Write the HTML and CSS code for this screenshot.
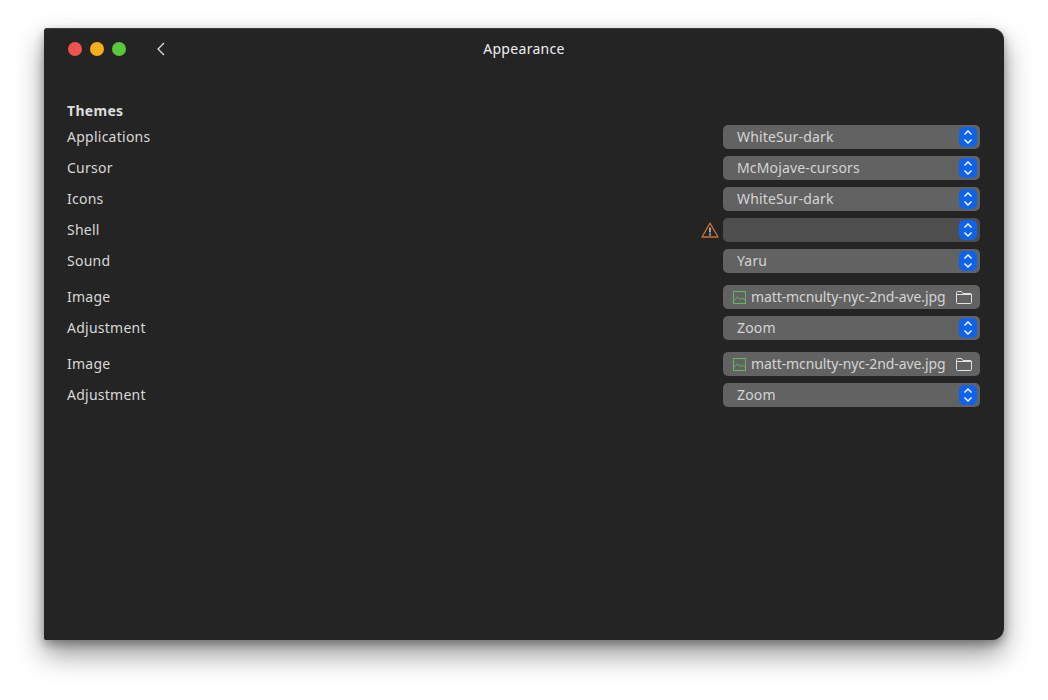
FILE: index.html
```html
<!DOCTYPE html>
<html lang="en">
<head>
<meta charset="utf-8">
<title>Appearance</title>
<link rel="stylesheet" href="styles.css">
</head>
<body>
<main class="window">
  <header class="titlebar">
    <div class="lights">
      <span class="light red"></span>
      <span class="light yellow"></span>
      <span class="light green"></span>
    </div>
    <svg class="back" width="10" height="14" viewBox="0 0 10 14"><path d="M8 1L2 7l6 6" fill="none" stroke="#e6e6e6" stroke-width="1.2"/></svg>
    <h1 class="title">Appearance</h1>
  </header>
  <section class="content">
    <h2 class="heading">Themes</h2>
    <div class="group">
      <div class="row"><span class="label">Applications</span><div class="select"><span class="value">WhiteSur-dark</span><span class="spin"><svg width="10" height="16" viewBox="0 0 10 16"><path d="M1.500 5.500L5 2l3.500 3.500M1.500 10.500L5 14l3.500-3.500" fill="none" stroke="#fff" stroke-width="1.400"/></svg></span></div></div>
      <div class="row"><span class="label">Cursor</span><div class="select"><span class="value">McMojave-cursors</span><span class="spin"><svg width="10" height="16" viewBox="0 0 10 16"><path d="M1.500 5.500L5 2l3.500 3.500M1.500 10.500L5 14l3.500-3.500" fill="none" stroke="#fff" stroke-width="1.400"/></svg></span></div></div>
      <div class="row"><span class="label">Icons</span><div class="select"><span class="value">WhiteSur-dark</span><span class="spin"><svg width="10" height="16" viewBox="0 0 10 16"><path d="M1.500 5.500L5 2l3.500 3.500M1.500 10.500L5 14l3.500-3.500" fill="none" stroke="#fff" stroke-width="1.400"/></svg></span></div></div>
      <div class="row"><span class="label">Shell</span>
        <svg class="warn" width="18" height="16" viewBox="0 0 18 16"><path d="M9 1.200L1 15h16z" fill="none" stroke="#c8703c" stroke-width="1.300" stroke-linejoin="round"/><path d="M9 5.500v5" stroke="#d8d0c8" stroke-width="1.500"/><path d="M9 11.500v2" stroke="#d8d0c8" stroke-width="1.500"/></svg>
        <div class="select dim"><span class="value"></span><span class="spin"><svg width="10" height="16" viewBox="0 0 10 16"><path d="M1.500 5.500L5 2l3.500 3.500M1.500 10.500L5 14l3.500-3.500" fill="none" stroke="#fff" stroke-width="1.400"/></svg></span></div></div>
      <div class="row"><span class="label">Sound</span><div class="select"><span class="value">Yaru</span><span class="spin"><svg width="10" height="16" viewBox="0 0 10 16"><path d="M1.500 5.500L5 2l3.500 3.500M1.500 10.500L5 14l3.500-3.500" fill="none" stroke="#fff" stroke-width="1.400"/></svg></span></div></div>
    </div>
    <div class="group">
      <div class="row"><span class="label">Image</span><div class="select file">
        <svg class="img-icon" width="14" height="14" viewBox="0 0 14 14"><rect x=".5" y="1.500" width="12" height="12" fill="none" stroke="#62b862"/><path d="M1 10.500L4.500 7l3 2.500 2-1.500 3 2.500" fill="none" stroke="#62b862"/></svg>
        <span class="filename">matt-mcnulty-nyc-2nd-ave.jpg</span>
        <svg class="folder" width="16" height="14" viewBox="0 0 16 14"><path d="M1.500 1.500h4l1.500 2h7.500a1 1 0 0 1 1 1v8a1 1 0 0 1-1 1h-13a1 1 0 0 1-1-1v-10a1 1 0 0 1 1-1zM.5 4.500h15" fill="none" stroke="#e2e2e2"/></svg>
      </div></div>
      <div class="row"><span class="label">Adjustment</span><div class="select"><span class="value">Zoom</span><span class="spin"><svg width="10" height="16" viewBox="0 0 10 16"><path d="M1.500 5.500L5 2l3.500 3.500M1.500 10.500L5 14l3.500-3.500" fill="none" stroke="#fff" stroke-width="1.400"/></svg></span></div></div>
    </div>
    <div class="group">
      <div class="row"><span class="label">Image</span><div class="select file">
        <svg class="img-icon" width="14" height="14" viewBox="0 0 14 14"><rect x=".5" y="1.500" width="12" height="12" fill="none" stroke="#62b862"/><path d="M1 10.500L4.500 7l3 2.500 2-1.500 3 2.500" fill="none" stroke="#62b862"/></svg>
        <span class="filename">matt-mcnulty-nyc-2nd-ave.jpg</span>
        <svg class="folder" width="16" height="14" viewBox="0 0 16 14"><path d="M1.500 1.500h4l1.500 2h7.500a1 1 0 0 1 1 1v8a1 1 0 0 1-1 1h-13a1 1 0 0 1-1-1v-10a1 1 0 0 1 1-1zM.5 4.500h15" fill="none" stroke="#e2e2e2"/></svg>
      </div></div>
      <div class="row"><span class="label">Adjustment</span><div class="select"><span class="value">Zoom</span><span class="spin"><svg width="10" height="16" viewBox="0 0 10 16"><path d="M1.500 5.500L5 2l3.500 3.500M1.500 10.500L5 14l3.500-3.500" fill="none" stroke="#fff" stroke-width="1.400"/></svg></span></div></div>
    </div>
  </section>
</main>
</body>
</html>
```

FILE: styles.css
```css
* { box-sizing: border-box; }
html, body { margin: 0; height: 100%; background: #fff; overflow: hidden; }
body {
  padding: 28px 44px 60px;
  font-family: "Noto Sans", "Open Sans", sans-serif;
  font-size: 14px;
  color: #d8d8d8;
}
.window {
  width: 960px;
  height: 612px;
  background: #242424;
  border-radius: 3px 12px 12px 2px;
  border-top: 1px solid #3c3c3c;
  box-shadow: 0 14px 28px rgba(0,0,0,.42), 0 4px 10px rgba(0,0,0,.3);
  display: flex;
  flex-direction: column;
}
.titlebar {
  height: 40px;
  display: flex;
  align-items: center;
  padding: 0 0 0 24px;
  position: relative;
}
.lights { display: flex; gap: 8px; }
.light { width: 14px; height: 14px; border-radius: 50%; }
.red { background: #ed5450; }
.yellow { background: #f6ae1c; }
.green { background: #5ac83c; }
.back { margin-left: 30px; }
.title {
  position: absolute;
  left: 0;
  right: 0;
  text-align: center;
  margin: 0;
  padding-bottom: 2px;
  font-size: 14px;
  font-weight: 400;
  letter-spacing: .3px;
  color: #f0f0f0;
}
.content { padding: 32px 24px 0 23px; }
.heading {
  margin: 0;
  height: 24px;
  line-height: 20px;
  font-size: 14px;
  font-weight: 700;
  letter-spacing: .3px;
  color: #dcdcdc;
}
.group { display: flex; flex-direction: column; gap: 7px; margin-bottom: 12px; }
.row { display: flex; align-items: center; height: 24px; }
.label { flex: 1; padding-bottom: 2px; letter-spacing: .25px; }
.warn { margin-right: 4px; }
.select {
  width: 257px;
  height: 24px;
  background: #626262;
  border-radius: 5px;
  display: flex;
  align-items: center;
  padding: 0 3px 0 14px;
  color: #d4d4d4;
}
.select.dim { background: #4e4e4e; }
.value { flex: 1; padding-bottom: 2px; letter-spacing: .15px; }
.spin {
  width: 18px;
  height: 20px;
  background: #0f62ea;
  border-radius: 5px;
  display: flex;
  align-items: center;
  justify-content: center;
}
.file { padding: 0 8px 0 10px; }
.img-icon { margin-right: 4px; }
.filename { flex: 1; white-space: nowrap; padding-bottom: 2px; letter-spacing: -.1px; }
.folder { flex: none; }
```
